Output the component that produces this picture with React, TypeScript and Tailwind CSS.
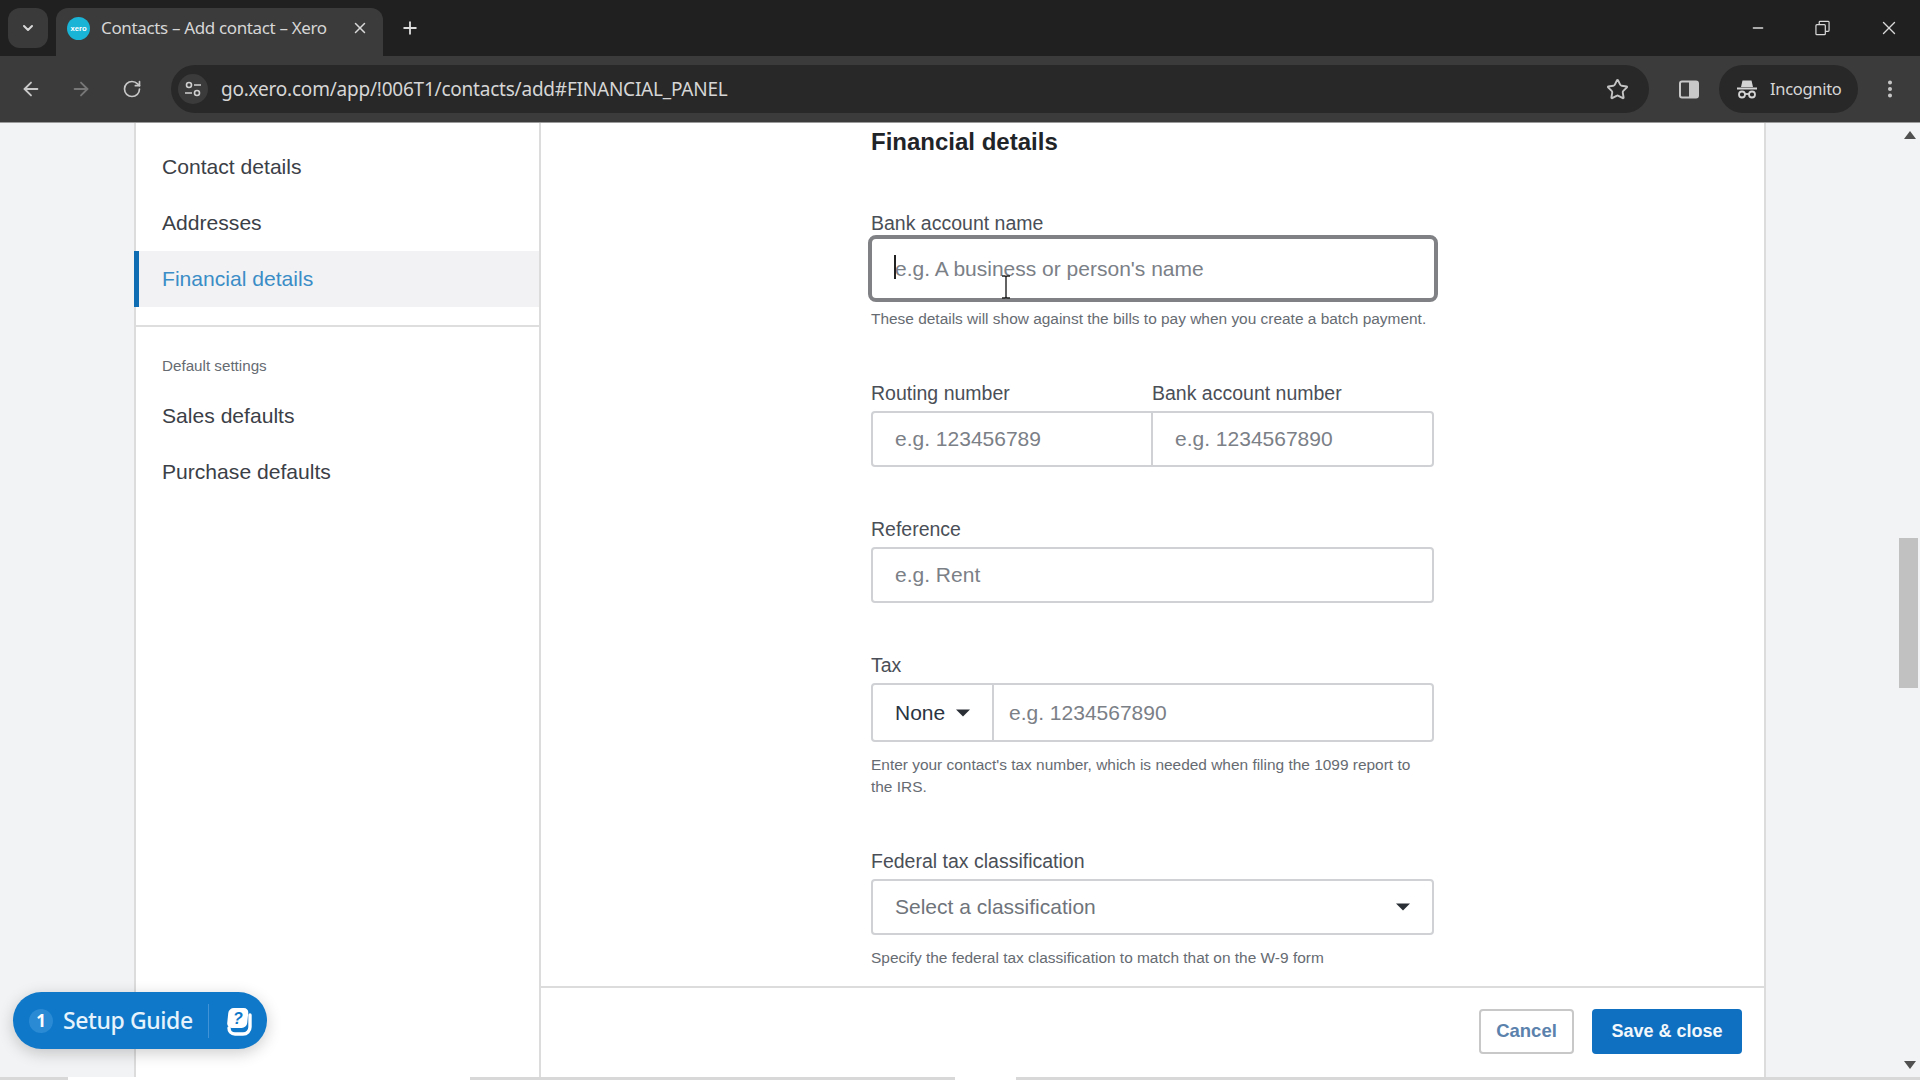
import React from "react";
import { ArrowLeft, ArrowRight, RotateCw, Star, X, Plus, ChevronDown, Minus, EllipsisVertical } from "lucide-react";

const arial = "font-['Liberation_Sans',Arial,sans-serif]";

function Label({ children, className = "" }: { children: React.ReactNode; className?: string }) {
  return <div className={`h-6 leading-6 text-[19.5px] text-[#4a4f57] ${className}`}>{children}</div>;
}

function Caret({ className = "" }: { className?: string }) {
  return (
    <svg viewBox="0 0 14 8" className={`w-[14px] h-2 ${className}`}>
      <path d="M0 0.5h14L7 7.5z" fill="#2a2f36" />
    </svg>
  );
}

function Help({ children, className = "" }: { children: React.ReactNode; className?: string }) {
  return <div className={`text-[15.45px] leading-[22px] text-[#666b72] ${className}`}>{children}</div>;
}

function NavItem({ label, active }: { label: string; active?: boolean }) {
  return (
    <div
      className={`h-14 flex items-center text-[21.1px] ${
        active ? "-ml-[2px] bg-[#f2f2f4] border-l-[5px] border-[#0f6db3] pl-[23px] text-[#3a8dc6]" : "pl-[26px] text-[#3b4047]"
      }`}
    >
      {label}
    </div>
  );
}

export default function App() {
  return (
    <div className={`relative w-[1920px] h-[1080px] overflow-hidden flex flex-col bg-[#f2f3f4] ${arial}`}>
      {/* tab strip */}
      <div className="h-14 shrink-0 bg-[#202020] flex items-end pl-2 text-[#d8d8d8]">
        <div className="w-10 h-10 mb-2 rounded-xl bg-[#3a3a3a] flex items-center justify-center">
          <ChevronDown size={16} strokeWidth={3} />
        </div>
        <div className="ml-2 w-[327px] h-12 rounded-t-xl bg-[#3b3b3b] flex items-center pl-[11px] pr-[14px] pb-2">
          <svg viewBox="0 0 24 24" className="w-[23px] h-[23px] shrink-0">
            <circle cx="12" cy="12" r="12" fill="#1ab4d7" />
            <text x="12" y="15" fontSize="8" fontWeight="700" textAnchor="middle" fill="#fff" fontFamily="Liberation Sans">xero</text>
          </svg>
          <span className="ml-[11px] text-[17px] text-[#d6d6d6] whitespace-nowrap font-['Noto_Sans',sans-serif] tracking-[-0.35px]">
            Contacts – Add contact – Xero
          </span>
          <X size={18} className="ml-auto text-[#d8d8d8]" />
        </div>
        <div className="w-[50px] h-12 flex items-center justify-center pl-1 pb-2">
          <Plus size={20} strokeWidth={2.2} className="text-[#dcdcdc]" />
        </div>
        <div className="ml-auto h-14 flex items-center text-[#d8d8d8]">
          <Minus size={16} className="mr-[49px]" />
          <svg viewBox="0 0 16 16" className="w-[15px] h-[16px] mr-[48px]" fill="none" stroke="currentColor" strokeWidth="1.3">
            <rect x="1" y="4.5" width="10" height="10.5" rx="1" />
            <path d="M4.5 4.5V1.7a.8.8 0 0 1 .8-.7h8.8a.8.8 0 0 1 .9.8v8.7a1 1 0 0 1-1 1H11" />
          </svg>
          <X size={22} strokeWidth={1.5} className="mr-[20px]" />
        </div>
      </div>

      {/* toolbar */}
      <div className="h-[67px] shrink-0 bg-[#3b3b3b] flex items-center text-[#c8c8c8] border-b border-[#9a9a9a]">
        <ArrowLeft size={22} className="ml-[20px]" />
        <ArrowRight size={22} className="ml-[28px] text-[#777777]" />
        <RotateCw size={20} className="ml-[30px]" />
        <div className="ml-[29px] w-[1478px] h-[48px] rounded-full bg-[#282828] flex items-center pl-[7px] pr-[20px]">
          <div className="w-[30px] h-[30px] rounded-full bg-[#3b3b3b] flex items-center justify-center">
            <svg viewBox="0 0 18 18" className="w-[18px] h-[18px]" fill="none" stroke="#d0d0d0" strokeWidth="1.6">
              <circle cx="5" cy="5" r="2.5" />
              <path d="M10 5h7M1 13h7" />
              <circle cx="13" cy="13" r="2.5" />
            </svg>
          </div>
          <span className="ml-[13px] text-[19px] text-[#d6d6d6] whitespace-nowrap font-['Noto_Sans',sans-serif] tracking-[-0.22px]">
            go.xero.com/app/!006T1/contacts/add#FINANCIAL_PANEL
          </span>
          <Star size={23} strokeWidth={2} className="ml-auto text-[#c4c4c4]" />
        </div>
        <svg viewBox="0 0 20 18" className="ml-[30px] w-[20px] h-[19px]">
          <rect x="1" y="1" width="18" height="16" rx="2" fill="none" stroke="#c8c8c8" strokeWidth="2" />
          <rect x="10" y="1" width="9" height="16" fill="#c8c8c8" />
        </svg>
        <div className="ml-[20px] w-[139px] h-[48px] rounded-full bg-[#282828] flex items-center pl-[17px]">
          <svg viewBox="0 0 22 22" className="w-[22px] h-[22px]" fill="none" stroke="#d4d4d4" strokeWidth="1.8">
            <path d="M5 9l1.5-6.5h9L17 9z" fill="#d4d4d4" stroke="none" />
            <path d="M1 10.5h20" strokeWidth="2" />
            <circle cx="6" cy="16.5" r="3" />
            <circle cx="16" cy="16.5" r="3" />
            <path d="M9 16h4" />
          </svg>
          <span className="ml-[12px] text-[16.5px] text-[#d6d6d6] font-['Noto_Sans',sans-serif] tracking-[-0.3px]">Incognito</span>
        </div>
        <EllipsisVertical size={22} strokeWidth={2.4} className="ml-[21px] text-[#c8c8c8]" />
      </div>

      {/* page */}
      <div className="flex-1 min-h-0 flex">
        <div className="w-[134px] shrink-0" />

        {/* sidebar nav */}
        <div className="w-[407px] shrink-0 bg-white border-x-2 border-[#dcdcdc] pt-[16px]">
          <NavItem label="Contact details" />
          <NavItem label="Addresses" />
          <NavItem label="Financial details" active />
          <div className="mt-[18px] border-t-2 border-[#dedede]" />
          <div className="mt-[29px] h-5 leading-5 pl-[26px] text-[15.2px] text-[#666b72]">Default settings</div>
          <div className="mt-[12px]">
            <NavItem label="Sales defaults" />
            <NavItem label="Purchase defaults" />
          </div>
        </div>

        {/* main */}
        <div className="w-[1225px] shrink-0 bg-white border-r-2 border-[#dcdcdc] flex flex-col">
          <div className="flex-1 min-h-0 pl-[330px] w-[893px]">
            <div className="h-[37px] leading-[37px] text-[24px] font-bold text-[#1f2429]">Financial details</div>

            <Label className="mt-[51px]">Bank account name</Label>
            <div className="-ml-[3px] w-[570px] h-[67px] rounded-lg border-[4px] border-[#808185] bg-white flex items-center pl-[23px] text-[21px] text-[#7b8087] relative">
              <span className="absolute left-[22px] top-[16px] w-[2px] h-[24px] bg-[#222]" />
              e.g. A business or person's name
              <svg viewBox="0 0 10 24" className="absolute left-[129px] top-[36px] w-[10px] h-[24px]" fill="none" stroke="#222" strokeWidth="1.4">
                <path d="M1 1h3l1 1 1-1h3M5 2v20M1 23h3l1-1 1 1h3" />
              </svg>
            </div>
            <Help className="mt-[6px]">These details will show against the bills to pay when you create a batch payment.</Help>

            <div className="mt-[51px] flex">
              <Label className="w-[281px]">Routing number</Label>
              <Label>Bank account number</Label>
            </div>
            <div className="mt-[6px] w-[563px] h-14 rounded border-2 border-[#cfd1d4] flex text-[21px] text-[#7b8087]">
              <div className="w-[280px] border-r-2 border-[#cfd1d4] flex items-center pl-[22px]">e.g. 123456789</div>
              <div className="flex-1 flex items-center pl-[22px]">e.g. 1234567890</div>
            </div>

            <Label className="mt-[50px]">Reference</Label>
            <div className="mt-[6px] w-[563px] h-14 rounded border-2 border-[#cfd1d4] flex items-center pl-[22px] text-[21px] text-[#7b8087]">e.g. Rent</div>

            <Label className="mt-[50px]">Tax</Label>
            <div className="mt-[6px] w-[563px] h-[59px] rounded border-2 border-[#cfd1d4] flex text-[21px]">
              <div className="w-[121px] border-r-2 border-[#cfd1d4] flex items-center pl-[22px] text-[#2a3442]">
                None
                <Caret className="ml-[11px]" />
              </div>
              <div className="flex-1 flex items-center pl-[15px] text-[#7b8087]">e.g. 1234567890</div>
            </div>
            <Help className="mt-[12px] w-[563px]">Enter your contact's tax number, which is needed when filing the 1099 report to the IRS.</Help>

            <Label className="mt-[51px]">Federal tax classification</Label>
            <div className="mt-[6px] w-[563px] h-14 rounded border-2 border-[#cfd1d4] flex items-center pl-[22px] pr-[22px] text-[21px] text-[#6f747b]">
              Select a classification
              <Caret className="ml-auto" />
            </div>
            <Help className="mt-[12px]">Specify the federal tax classification to match that on the W-9 form</Help>
          </div>

          {/* footer */}
          <div className="h-[91px] shrink-0 border-t-2 border-[#dcdcdc] flex items-center justify-end gap-[18px] pr-[22px] pb-[3px]">
            <button className="w-[95px] h-[45px] rounded border-2 border-[#c8c8c8] bg-white text-[18.5px] font-bold text-[#5b82ad]">Cancel</button>
            <button className="w-[150px] h-[45px] rounded bg-[#0f6fc0] text-[18px] font-bold text-[#f2f7fb]">Save &amp; close</button>
          </div>
        </div>

        {/* right gutter + scrollbar */}
        <div className="flex-1 flex justify-end">
          <div className="w-[21px] flex flex-col items-center pt-[8px] pb-[8px]">
            <svg viewBox="0 0 12 8" className="w-3 h-2"><path d="M6 0l6 8H0z" fill="#505050" /></svg>
            <div className="mt-[399px] mr-[2px] w-[19px] h-[150px] bg-[#c1c1c1]" />
            <svg viewBox="0 0 12 8" className="mt-auto w-3 h-2"><path d="M0 0h12L6 8z" fill="#505050" /></svg>
          </div>
        </div>
      </div>

      {/* strip along the bottom edge */}
      <div className="h-[3px] shrink-0 bg-[#d8d8d8] flex">
        <div className="ml-[68px] w-[402px] bg-white" />
        <div className="ml-[485px] w-[61px] bg-white" />
      </div>

      {/* floating setup guide */}
      <div className="absolute left-[13px] top-[992px] w-[254px] h-[57px] rounded-full bg-[#0f78c9] shadow-[0_4px_16px_rgba(0,0,0,0.2)] flex items-center text-white font-['Noto_Sans',sans-serif]">
        <div className="ml-[16px] w-[24px] h-[24px] rounded-full bg-[#2b8ad4] flex items-center justify-center text-[17px] font-bold">1</div>
        <span className="ml-[10px] text-[23px] font-medium text-[#e6f3fc] tracking-[-0.4px] whitespace-nowrap">Setup Guide</span>
        <div className="ml-[15px] w-px h-[34px] bg-[#3f93d6]" />
        <svg viewBox="0 0 28 30" className="ml-[16px] w-[28px] h-[30px]">
          <path d="M4 22c0 3 2 6 6 6h8c4 0 7-3 7-7V9" fill="none" stroke="#fff" strokeWidth="3.4" strokeLinecap="round" />
          <rect x="2" y="2" width="20" height="20" rx="5" fill="#fff" transform="skewX(-6) translate(2 0)" />
          <text x="13" y="18" fontSize="16" fontWeight="800" fontStyle="italic" textAnchor="middle" fill="#0f78c9" fontFamily="Liberation Sans">?</text>
        </svg>
      </div>
    </div>
  );
}
